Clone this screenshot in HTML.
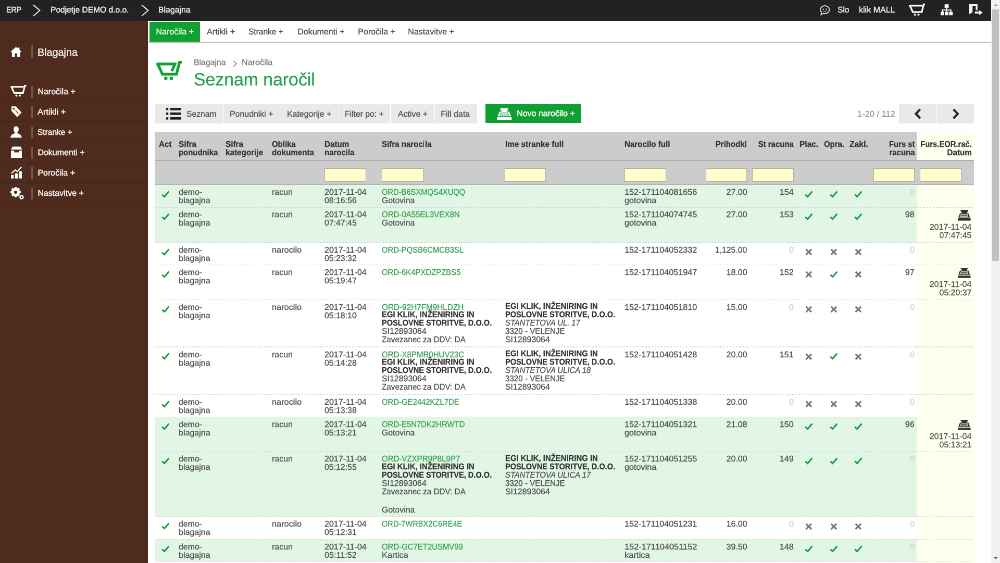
<!DOCTYPE html>
<html lang="sl">
<head>
<meta charset="utf-8">
<title>Seznam naročil - Blagajna</title>
<style>
html,body{margin:0;padding:0;background:#fff;}
body{width:1000px;height:563px;overflow:hidden;position:relative;}
#w{position:absolute;left:0;top:0;width:1920px;height:1081px;overflow:hidden;transform:scale(0.5208333);will-change:transform;transform-origin:0 0;
font-family:"Liberation Sans",sans-serif;font-size:16px;line-height:16px;color:#505050;text-rendering:geometricPrecision;}
#w nav,#w header,#w aside,#w main{display:block;position:static;margin:0;padding:0;}
#w div,#w svg,#w span.t{position:absolute;display:block;}
#w div.dl{height:1.2px;background:repeating-linear-gradient(90deg,#d4d4d4 0,#d4d4d4 3.2px,transparent 3.2px,transparent 6px);}
#w span.t{white-space:nowrap;-webkit-text-stroke:0.3px currentColor;transform-origin:0 50%;}
#w span.b{font-weight:bold;-webkit-text-stroke:0.25px currentColor;}
</style>
</head>
<body>
<div id="w">
<nav id="sidebar">
<div style="left:0.00px;top:0.00px;width:284.16px;height:1080.96px;background:#4e2b1c;"></div>
<svg style="left:20.35px;top:90.24px;" width="21.50" height="19.20" viewBox="0 0 22 20"><path d="M11 0 L0 9.6 L1.6 11 L2.8 10 V20 H8.6 V13 H13.4 V20 H19.2 V10 L20.4 11 L22 9.6 L18 6.1 V1.2 H15.2 V3.7Z" fill="#fff"/></svg>
<div style="left:59.52px;top:87.36px;width:3.07px;height:24.77px;background:#78574a;"></div>
<span class="t" style="top:90.88px;left:72.38px;font-size:20px;line-height:20px;color:#f4ebe7;transform:scaleX(0.9894);-webkit-text-stroke-width:0.45px;">Blagajna</span>
<div style="left:0.00px;top:154.66px;width:284.16px;height:1.73px;background:#432418;"></div>
<div style="left:59.52px;top:164.93px;width:3.07px;height:23.42px;background:#78574a;"></div>
<span class="t" style="top:168.95px;left:72.38px;color:#f7efec;-webkit-text-stroke-width:0.5px;">Naročila +</span>
<div style="left:0.00px;top:193.65px;width:284.16px;height:1.73px;background:#432418;"></div>
<div style="left:59.52px;top:203.92px;width:3.07px;height:23.42px;background:#78574a;"></div>
<span class="t" style="top:207.95px;left:72.38px;color:#f7efec;transform:scaleX(1.0267);-webkit-text-stroke-width:0.5px;">Artikli +</span>
<div style="left:0.00px;top:232.65px;width:284.16px;height:1.73px;background:#432418;"></div>
<div style="left:59.52px;top:242.92px;width:3.07px;height:23.42px;background:#78574a;"></div>
<span class="t" style="top:246.94px;left:72.38px;color:#f7efec;transform:scaleX(0.9701);-webkit-text-stroke-width:0.5px;">Stranke +</span>
<div style="left:0.00px;top:271.64px;width:284.16px;height:1.73px;background:#432418;"></div>
<div style="left:59.52px;top:281.91px;width:3.07px;height:23.42px;background:#78574a;"></div>
<span class="t" style="top:285.94px;left:72.38px;color:#f7efec;-webkit-text-stroke-width:0.5px;">Dokumenti +</span>
<div style="left:0.00px;top:310.64px;width:284.16px;height:1.73px;background:#432418;"></div>
<div style="left:59.52px;top:320.91px;width:3.07px;height:23.42px;background:#78574a;"></div>
<span class="t" style="top:324.93px;left:72.38px;color:#f7efec;-webkit-text-stroke-width:0.5px;">Poročila +</span>
<div style="left:0.00px;top:349.63px;width:284.16px;height:1.73px;background:#432418;"></div>
<div style="left:59.52px;top:359.90px;width:3.07px;height:23.42px;background:#78574a;"></div>
<span class="t" style="top:363.93px;left:72.38px;color:#f7efec;-webkit-text-stroke-width:0.5px;">Nastavitve +</span>
<div style="left:0.00px;top:388.63px;width:284.16px;height:1.73px;background:#432418;"></div>
<svg style="left:20.35px;top:163.20px;" width="30.91" height="22.66" viewBox="0 0 50 37"><g fill="none" stroke="#fff" stroke-width="5.2" stroke-linejoin="miter"><path d="M0.3 6 H41"/><path d="M3 6 L11.8 25.6 H39 L45 1.9 H50"/></g><circle cx="18.4" cy="33.6" r="3.3" fill="#fff"/><circle cx="29" cy="33.6" r="3.3" fill="#fff"/></svg>
<svg style="left:20.74px;top:202.58px;" width="21.50" height="23.04" viewBox="0 0 22 23"><path d="M1 1 H10 L21 13 L12 22 L1 10Z" fill="#fff"/><circle cx="5.5" cy="5.5" r="2" fill="#4e2b1c"/><path d="M9 9 L14.5 15.5" stroke="#4e2b1c" stroke-width="1.5"/></svg>
<svg style="left:20.35px;top:241.96px;" width="21.89" height="22.66" viewBox="0 0 22 22"><path d="M11 0 C14.2 0 16 2.4 16 5.6 C16 8.6 14.8 10.6 13.4 11.8 V13.6 C17.5 14.8 21.5 16.5 22 22 H0 C0.5 16.5 4.5 14.8 8.6 13.6 V11.8 C7.2 10.6 6 8.6 6 5.6 C6 2.4 7.8 0 11 0Z" fill="#fff"/></svg>
<svg style="left:20.74px;top:281.34px;" width="21.50" height="22.27" viewBox="0 0 22 22"><path d="M3 0 H19 L22 6 H0Z" fill="#fff"/><path d="M0 8 H6.5 V11.5 H15.5 V8 H22 V22 H0Z" fill="#fff"/></svg>
<svg style="left:20.74px;top:319.18px;" width="21.50" height="23.81" viewBox="0 0 22 24"><g fill="#fff"><rect x="0" y="17" width="5.5" height="7"/><rect x="8" y="14" width="5.5" height="10"/><rect x="16" y="10" width="5.5" height="14"/></g><path d="M1 14 L8.5 7.5 L12.5 10.5 L21 1" fill="none" stroke="#fff" stroke-width="2.2"/></svg>
<svg style="left:19.58px;top:358.75px;" width="26.50" height="24.58" viewBox="0 0 28 26"><circle cx="10.5" cy="10.5" r="6.3" fill="none" stroke="#fff" stroke-width="5"/><g stroke="#fff" stroke-width="4.2"><path d="M10.5 0 V21 M0 10.5 H21 M3.1 3.1 L17.9 17.9 M17.9 3.1 L3.1 17.9"/></g><circle cx="10.5" cy="10.5" r="3.2" fill="#4e2b1c"/><circle cx="22.6" cy="20.6" r="3.2" fill="none" stroke="#fff" stroke-width="2.6"/><circle cx="22.6" cy="20.6" r="1.3" fill="#4e2b1c"/></svg>
</nav>
<header id="topbar">
<div style="left:0.00px;top:0.00px;width:1902.91px;height:40.01px;background:#222222;"></div>
<span class="t" style="top:11.70px;left:12.48px;color:#eeeeee;transform:scaleX(0.8829);-webkit-text-stroke-width:0.45px;">ERP</span>
<span class="t" style="top:11.70px;left:96.96px;color:#eeeeee;transform:scaleX(0.9722);-webkit-text-stroke-width:0.45px;">Podjetje DEMO d.o.o.</span>
<span class="t" style="top:11.70px;left:304.32px;color:#eeeeee;transform:scaleX(0.9894);-webkit-text-stroke-width:0.45px;">Blagajna</span>
<svg style="left:62.98px;top:7.68px;" width="14.98" height="24.19" viewBox="0 0 14 22"><path d="M1 1 L12.5 11 L1 21" fill="none" stroke="#e4e4e4" stroke-width="2"/></svg>
<svg style="left:271.30px;top:7.68px;" width="14.98" height="24.19" viewBox="0 0 14 22"><path d="M1 1 L12.5 11 L1 21" fill="none" stroke="#e4e4e4" stroke-width="2"/></svg>
<span class="t" style="top:11.70px;left:1607.81px;color:#eeeeee;transform:scaleX(0.9736);-webkit-text-stroke-width:0.45px;">Slo</span>
<span class="t" style="top:11.70px;left:1648.51px;color:#eeeeee;transform:scaleX(1.0057);-webkit-text-stroke-width:0.45px;">klik MALL</span>
<svg style="left:1573.25px;top:8.83px;" width="21.50" height="21.12" viewBox="0 0 22 22"><path d="M11 2 C5.8 2 2 5.6 2 10 C2 12.3 3 14.2 4.6 15.6 L3.4 20 L8.3 17.6 C9.2 17.9 10.1 18 11 18 C16.2 18 20 14.4 20 10 C20 5.6 16.2 2 11 2Z" fill="none" stroke="#ddd" stroke-width="2"/><circle cx="8" cy="9" r="1.3" fill="#ddd"/><circle cx="14" cy="9" r="1.3" fill="#ddd"/><path d="M7.5 12.5 Q11 14.5 14.5 12.5" fill="none" stroke="#ddd" stroke-width="1.3"/></svg>
<svg style="left:1744.51px;top:6.91px;" width="31.87" height="23.42" viewBox="0 0 50 37"><g fill="none" stroke="#ffffff" stroke-width="5.2" stroke-linejoin="miter"><path d="M0.3 6 H41"/><path d="M3 6 L11.8 25.6 H39 L45 1.9 H50"/></g><circle cx="18.4" cy="33.6" r="3.3" fill="#ffffff"/><circle cx="29" cy="33.6" r="3.3" fill="#ffffff"/></svg>
<svg style="left:1805.95px;top:8.06px;" width="23.04" height="21.50" viewBox="0 0 24 22"><g fill="#fff"><rect x="8" y="0" width="8" height="7"/><rect x="0" y="15" width="7" height="7"/><rect x="8.5" y="15" width="7" height="7"/><rect x="17" y="15" width="7" height="7"/><rect x="11" y="7" width="2" height="8"/><rect x="2.5" y="10.5" width="19" height="2"/><rect x="2.5" y="10.5" width="2" height="5"/><rect x="19.5" y="10.5" width="2" height="5"/></g></svg>
<svg style="left:1860.10px;top:7.68px;" width="26.88" height="21.89" viewBox="0 0 28 23"><path d="M0 0 H17.5 V12 H14 V3.5 H7.5 L7.5 16.5 L0 20.5Z" fill="#f2f2f2"/><path d="M12 15 H21 V11.8 L28 17 L21 22.2 V19 H12Z" fill="#f2f2f2"/></svg>
</header>
<aside id="scrollbar">
<div style="left:1902.91px;top:0.00px;width:17.09px;height:1080.96px;background:#f1f1f1;"></div>
<div style="left:1905.02px;top:18.05px;width:12.86px;height:482.50px;background:#c1c1c1;"></div>
<svg style="left:1907.52px;top:6.53px;" width="7.68" height="4.61" viewBox="0 0 10 6"><path d="M0 6 L5 0 L10 6Z" fill="#a3a3a3"/></svg>
<svg style="left:1907.52px;top:1069.44px;" width="7.68" height="4.99" viewBox="0 0 10 6"><path d="M0 0 L5 6 L10 0Z" fill="#505050"/></svg>
</aside>
<nav id="tabs">
<div style="left:284.16px;top:80.45px;width:1618.75px;height:1.92px;background:#c0c0c0;"></div>
<div style="left:287.04px;top:42.24px;width:96.96px;height:37.63px;background:#109f33;"></div>
<span class="t" style="top:53.94px;left:299.52px;color:#e6ffe6;">Naročila +</span>
<span class="t" style="top:53.94px;left:397.44px;color:#4c4c4c;transform:scaleX(1.0267);">Artikli +</span>
<span class="t" style="top:53.94px;left:477.12px;color:#4c4c4c;transform:scaleX(0.9701);">Stranke +</span>
<span class="t" style="top:53.94px;left:571.20px;color:#4c4c4c;">Dokumenti +</span>
<span class="t" style="top:53.94px;left:687.36px;color:#4c4c4c;">Poročila +</span>
<span class="t" style="top:53.94px;left:783.36px;color:#4c4c4c;">Nastavitve +</span>
</nav>
<main id="content">
<svg style="left:299.65px;top:117.02px;" width="49.79" height="36.77" viewBox="0 0 50 37"><g fill="none" stroke="#109f33" stroke-width="5.3" stroke-linejoin="miter"><path d="M0.3 6 H36 L30 19.8"/><path d="M3 6 L11.8 25.6 H39 L45 1.9 H50"/></g><circle cx="18.4" cy="33.6" r="3.3" fill="#109f33"/><circle cx="29" cy="33.6" r="3.3" fill="#109f33"/></svg>
<span class="t" style="top:113.46px;left:372.48px;color:#777;transform:scaleX(0.9894);">Blagajna</span>
<svg style="left:446.98px;top:115.78px;" width="8.83" height="12.67" viewBox="0 0 9 13"><path d="M1 1 L7.5 6.5 L1 12" fill="none" stroke="#808080" stroke-width="1.6"/></svg>
<span class="t" style="top:113.46px;left:463.87px;color:#777;transform:scaleX(1.0116);">Naročila</span>
<span class="t" style="top:136.05px;left:372.48px;font-size:34px;line-height:34px;color:#26a14a;transform:scaleX(0.9934);">Seznam naročil</span>
<div style="left:297.60px;top:199.68px;width:130.94px;height:37.82px;background:#e9e9e9;"></div>
<div style="left:430.08px;top:199.68px;width:108.67px;height:37.82px;background:#e9e9e9;"></div>
<div style="left:540.29px;top:199.68px;width:109.44px;height:37.82px;background:#e9e9e9;"></div>
<div style="left:651.26px;top:199.68px;width:97.92px;height:37.82px;background:#e9e9e9;"></div>
<div style="left:751.10px;top:199.68px;width:82.56px;height:37.82px;background:#e9e9e9;"></div>
<div style="left:835.20px;top:199.68px;width:80.64px;height:37.82px;background:#e9e9e9;"></div>
<span class="t" style="top:211.58px;left:358.08px;transform:scaleX(0.9795);">Seznam</span>
<span class="t" style="top:211.58px;left:440.64px;transform:scaleX(0.9941);">Ponudniki +</span>
<span class="t" style="top:211.58px;left:551.04px;transform:scaleX(0.9931);">Kategorije +</span>
<span class="t" style="top:211.58px;left:662.40px;transform:scaleX(0.9833);">Filter po: +</span>
<span class="t" style="top:211.58px;left:764.16px;transform:scaleX(0.9958);">Active +</span>
<span class="t" style="top:211.58px;left:846.24px;">Fill data</span>
<svg style="left:317.76px;top:207.36px;" width="30.14" height="22.66" viewBox="0 0 30 23"><g fill="#222"><rect x="0" y="0" width="5" height="4.6"/><rect x="0" y="9.2" width="5" height="4.6"/><rect x="0" y="18.4" width="5" height="4.6"/><rect x="8.5" y="0" width="21.5" height="4.8"/><rect x="8.5" y="9.1" width="21.5" height="4.8"/><rect x="8.5" y="18.2" width="21.5" height="4.8"/></g></svg>
<div style="left:931.68px;top:199.68px;width:184.32px;height:37.82px;background:#109f33;"></div>
<svg style="left:954.24px;top:207.74px;" width="28.80" height="22.27" viewBox="0 0 24.6 19.6"><path fill="#fff" d="M5.5 0 H19 V3 H17 V5.5 H20.5 L23.5 13.5 H1 L4 5.5 H7.5 V3 H5.5 Z M6 7 L4.3 11.8 H20.2 L18.5 7 Z"/><path fill="#fff" d="M6.6 7.8 H17.9 L19 11 H5.5 Z" opacity="0.75"/><rect x="0" y="15" width="24.6" height="4.6" fill="#fff"/></svg>
<span class="t" style="top:211.38px;left:992.16px;color:#f0fff0;-webkit-text-stroke-width:0.6px;">Novo naročilo +</span>
<span class="t" style="top:211.77px;left:1646.40px;color:#999;transform:scaleX(1.0289);">1-20 / 112</span>
<div style="left:1726.08px;top:199.68px;width:71.62px;height:37.82px;background:#e9e9e9;"></div>
<div style="left:1799.04px;top:199.68px;width:70.56px;height:37.82px;background:#e9e9e9;"></div>
<svg style="left:1755.26px;top:207.94px;" width="14.21" height="21.12" viewBox="0 0 13 20"><path d="M10.8 1.8 L3 10 L10.8 18.2" fill="none" stroke="#2a2a2a" stroke-width="4"/></svg>
<svg style="left:1827.65px;top:207.94px;" width="14.21" height="21.12" viewBox="0 0 13 20"><path d="M2.2 1.8 L10 10 L2.2 18.2" fill="none" stroke="#2a2a2a" stroke-width="4"/></svg>
<div style="left:1760.26px;top:253.63px;width:109.34px;height:827.33px;background:#fffff0;"></div>
<div style="left:297.41px;top:253.63px;width:1462.85px;height:101.38px;background:#cccccc;"></div>
<div style="left:1760.26px;top:307.20px;width:109.34px;height:47.81px;background:#cccccc;"></div>
<div style="left:297.41px;top:306.82px;width:1572.19px;height:1.92px;background:#aeaeae;"></div>
<div style="left:297.41px;top:253.06px;width:1462.85px;height:1.34px;background:#bdbdbd;"></div>
<span class="t b" style="top:270.33px;left:305.47px;color:#333;transform:scaleX(0.9515);">Act</span>
<span class="t b" style="top:270.33px;left:343.10px;color:#333;transform:scaleX(0.9558);">Sifra</span>
<span class="t b" style="top:286.32px;left:343.10px;color:#333;transform:scaleX(0.9313);">ponudnika</span>
<span class="t b" style="top:270.33px;left:432.96px;color:#333;transform:scaleX(0.9558);">Sifra</span>
<span class="t b" style="top:286.32px;left:432.96px;color:#333;transform:scaleX(0.9561);">kategorije</span>
<span class="t b" style="top:270.33px;left:521.76px;color:#333;transform:scaleX(0.9337);">Oblika</span>
<span class="t b" style="top:286.32px;left:521.76px;color:#333;transform:scaleX(0.9494);">dokumenta</span>
<span class="t b" style="top:270.33px;left:623.04px;color:#333;transform:scaleX(0.9482);">Datum</span>
<span class="t b" style="top:286.32px;left:623.04px;color:#333;transform:scaleX(0.9381);">narocila</span>
<span class="t b" style="top:270.33px;left:733.44px;color:#333;transform:scaleX(0.9425);">Sifra narocila</span>
<span class="t b" style="top:270.33px;left:969.60px;color:#333;transform:scaleX(0.9555);">Ime stranke full</span>
<span class="t b" style="top:270.33px;left:1199.04px;color:#333;transform:scaleX(0.9468);">Narocilo full</span>
<span class="t b" style="top:270.33px;right:485.76px;transform-origin:100% 50%;color:#333;transform:scaleX(0.9410);">Prihodki</span>
<span class="t b" style="top:270.33px;right:396.00px;transform-origin:100% 50%;color:#333;transform:scaleX(0.9362);">St racuna</span>
<span class="t b" style="top:270.33px;left:1535.04px;color:#333;transform:scaleX(0.9678);">Plac.</span>
<span class="t b" style="top:270.33px;left:1581.60px;color:#333;transform:scaleX(0.9308);">Opra.</span>
<span class="t b" style="top:270.33px;left:1630.56px;color:#333;transform:scaleX(0.9798);">Zakl.</span>
<span class="t b" style="top:270.33px;right:163.20px;transform-origin:100% 50%;color:#333;transform:scaleX(0.9235);">Furs st</span>
<span class="t b" style="top:286.32px;right:163.20px;transform-origin:100% 50%;color:#333;transform:scaleX(0.9346);">racuna</span>
<span class="t b" style="top:270.33px;right:54.72px;transform-origin:100% 50%;color:#333;transform:scaleX(0.9222);">Furs.EOR.rač.</span>
<span class="t b" style="top:286.32px;right:54.72px;transform-origin:100% 50%;color:#333;transform:scaleX(0.9482);">Datum</span>
<div style="left:623.04px;top:323.04px;width:79.87px;height:25.92px;background:#ffffcc;border:1px solid #b4b29b;box-sizing:border-box;"></div>
<div style="left:732.96px;top:323.04px;width:79.87px;height:25.92px;background:#ffffcc;border:1px solid #b4b29b;box-sizing:border-box;"></div>
<div style="left:968.64px;top:323.04px;width:79.87px;height:25.92px;background:#ffffcc;border:1px solid #b4b29b;box-sizing:border-box;"></div>
<div style="left:1199.04px;top:323.04px;width:79.87px;height:25.92px;background:#ffffcc;border:1px solid #b4b29b;box-sizing:border-box;"></div>
<div style="left:1354.56px;top:323.04px;width:79.87px;height:25.92px;background:#ffffcc;border:1px solid #b4b29b;box-sizing:border-box;"></div>
<div style="left:1444.32px;top:323.04px;width:79.87px;height:25.92px;background:#ffffcc;border:1px solid #b4b29b;box-sizing:border-box;"></div>
<div style="left:1676.64px;top:323.04px;width:79.87px;height:25.92px;background:#ffffcc;border:1px solid #b4b29b;box-sizing:border-box;"></div>
<div style="left:1766.40px;top:323.04px;width:79.87px;height:25.92px;background:#ffffcc;border:1px solid #b4b29b;box-sizing:border-box;"></div>
<div style="left:297.41px;top:354.43px;width:1462.85px;height:43.78px;background:#e1f6e4;"></div>
<svg style="left:309.50px;top:366.14px;" width="15.74" height="13.63" viewBox="0 0 15.7 13.6"><path d="M1.3 7.6 L5.6 11.6 L14.3 1.6" fill="none" stroke="#159c3a" stroke-width="3"/></svg>
<span class="t" style="top:362.20px;left:343.10px;transform:scaleX(0.9941);">demo-</span>
<span class="t" style="top:378.20px;left:343.10px;">blagajna</span>
<span class="t" style="top:362.20px;left:521.76px;transform:scaleX(0.9955);">racun</span>
<span class="t" style="top:362.20px;left:623.04px;">2017-11-04</span>
<span class="t" style="top:378.20px;left:623.04px;transform:scaleX(0.9907);">08:16:56</span>
<span class="t" style="top:362.20px;left:733.44px;color:#36a155;transform:scaleX(0.9192);">ORD-B6SXMQS4XUQQ</span>
<span class="t" style="top:378.20px;left:733.44px;transform:scaleX(0.9883);">Gotovina</span>
<span class="t" style="top:362.20px;left:1199.04px;transform:scaleX(1.0123);">152-171104081656</span>
<span class="t" style="top:378.20px;left:1199.04px;transform:scaleX(1.0146);">gotovina</span>
<span class="t" style="top:362.20px;right:485.38px;transform-origin:100% 50%;">27.00</span>
<span class="t" style="top:362.20px;right:396.29px;transform-origin:100% 50%;transform:scaleX(1.0105);">154</span>
<svg style="left:1545.41px;top:366.14px;" width="15.74" height="13.63" viewBox="0 0 15.7 13.6"><path d="M1.3 7.6 L5.6 11.6 L14.3 1.6" fill="none" stroke="#159c3a" stroke-width="3"/></svg>
<svg style="left:1592.64px;top:366.14px;" width="15.74" height="13.63" viewBox="0 0 15.7 13.6"><path d="M1.3 7.6 L5.6 11.6 L14.3 1.6" fill="none" stroke="#159c3a" stroke-width="3"/></svg>
<svg style="left:1640.06px;top:366.14px;" width="15.74" height="13.63" viewBox="0 0 15.7 13.6"><path d="M1.3 7.6 L5.6 11.6 L14.3 1.6" fill="none" stroke="#159c3a" stroke-width="3"/></svg>
<span class="t" style="top:362.20px;right:163.78px;transform-origin:100% 50%;color:#cfcfcf;transform:scaleX(1.0105);">0</span>
<div style="left:297.41px;top:397.63px;width:1462.85px;height:68.16px;background:#e1f6e4;"></div>
<div class="dl" style="left:297.41px;top:397.33px;width:1572.19px;"></div>
<svg style="left:309.50px;top:409.34px;" width="15.74" height="13.63" viewBox="0 0 15.7 13.6"><path d="M1.3 7.6 L5.6 11.6 L14.3 1.6" fill="none" stroke="#159c3a" stroke-width="3"/></svg>
<span class="t" style="top:405.40px;left:343.10px;transform:scaleX(0.9941);">demo-</span>
<span class="t" style="top:421.40px;left:343.10px;">blagajna</span>
<span class="t" style="top:405.40px;left:521.76px;transform:scaleX(0.9955);">racun</span>
<span class="t" style="top:405.40px;left:623.04px;">2017-11-04</span>
<span class="t" style="top:421.40px;left:623.04px;transform:scaleX(0.9907);">07:47:45</span>
<span class="t" style="top:405.40px;left:733.44px;color:#36a155;transform:scaleX(0.9399);">ORD-0A55EL3VEX8N</span>
<span class="t" style="top:421.40px;left:733.44px;transform:scaleX(0.9883);">Gotovina</span>
<span class="t" style="top:405.40px;left:1199.04px;transform:scaleX(1.0123);">152-171104074745</span>
<span class="t" style="top:421.40px;left:1199.04px;transform:scaleX(1.0146);">gotovina</span>
<span class="t" style="top:405.40px;right:485.38px;transform-origin:100% 50%;">27.00</span>
<span class="t" style="top:405.40px;right:396.29px;transform-origin:100% 50%;transform:scaleX(1.0105);">153</span>
<svg style="left:1545.41px;top:409.34px;" width="15.74" height="13.63" viewBox="0 0 15.7 13.6"><path d="M1.3 7.6 L5.6 11.6 L14.3 1.6" fill="none" stroke="#159c3a" stroke-width="3"/></svg>
<svg style="left:1592.64px;top:409.34px;" width="15.74" height="13.63" viewBox="0 0 15.7 13.6"><path d="M1.3 7.6 L5.6 11.6 L14.3 1.6" fill="none" stroke="#159c3a" stroke-width="3"/></svg>
<svg style="left:1640.06px;top:409.34px;" width="15.74" height="13.63" viewBox="0 0 15.7 13.6"><path d="M1.3 7.6 L5.6 11.6 L14.3 1.6" fill="none" stroke="#159c3a" stroke-width="3"/></svg>
<span class="t" style="top:405.40px;right:163.78px;transform-origin:100% 50%;transform:scaleX(1.0105);">98</span>
<svg style="left:1838.98px;top:403.97px;" width="24.58" height="19.58" viewBox="0 0 24.6 19.6"><path fill="#333" d="M5.5 0 H19 V3 H17 V5.5 H20.5 L23.5 13.5 H1 L4 5.5 H7.5 V3 H5.5 Z M6 7 L4.3 11.8 H20.2 L18.5 7 Z"/><path fill="#333" d="M6.6 7.8 H17.9 L19 11 H5.5 Z" opacity="0.75"/><rect x="0" y="15" width="24.6" height="4.6" fill="#333"/></svg>
<span class="t" style="top:429.02px;right:54.72px;transform-origin:100% 50%;">2017-11-04</span>
<span class="t" style="top:445.02px;right:54.72px;transform-origin:100% 50%;transform:scaleX(0.9907);">07:47:45</span>
<div class="dl" style="left:297.41px;top:464.92px;width:1572.19px;"></div>
<svg style="left:309.50px;top:476.93px;" width="15.74" height="13.63" viewBox="0 0 15.7 13.6"><path d="M1.3 7.6 L5.6 11.6 L14.3 1.6" fill="none" stroke="#159c3a" stroke-width="3"/></svg>
<span class="t" style="top:472.98px;left:343.10px;transform:scaleX(0.9941);">demo-</span>
<span class="t" style="top:488.98px;left:343.10px;">blagajna</span>
<span class="t" style="top:472.98px;left:521.76px;transform:scaleX(1.0210);">narocilo</span>
<span class="t" style="top:472.98px;left:623.04px;">2017-11-04</span>
<span class="t" style="top:488.98px;left:623.04px;transform:scaleX(0.9907);">05:23:32</span>
<span class="t" style="top:472.98px;left:733.44px;color:#36a155;transform:scaleX(0.9258);">ORD-PQSB6CMCB3SL</span>
<span class="t" style="top:472.98px;left:1199.04px;transform:scaleX(1.0123);">152-171104052332</span>
<span class="t" style="top:472.98px;right:485.38px;transform-origin:100% 50%;transform:scaleX(0.9846);">1,125.00</span>
<span class="t" style="top:472.98px;right:396.29px;transform-origin:100% 50%;color:#cfcfcf;transform:scaleX(1.0105);">0</span>
<svg style="left:1546.46px;top:477.31px;" width="13.63" height="13.63" viewBox="0 0 13.6 13.6"><path d="M1.6 1.6 L12 12 M12 1.6 L1.6 12" fill="none" stroke="#7a7a7a" stroke-width="3.4"/></svg>
<svg style="left:1593.70px;top:477.31px;" width="13.63" height="13.63" viewBox="0 0 13.6 13.6"><path d="M1.6 1.6 L12 12 M12 1.6 L1.6 12" fill="none" stroke="#7a7a7a" stroke-width="3.4"/></svg>
<svg style="left:1641.12px;top:477.31px;" width="13.63" height="13.63" viewBox="0 0 13.6 13.6"><path d="M1.6 1.6 L12 12 M12 1.6 L1.6 12" fill="none" stroke="#7a7a7a" stroke-width="3.4"/></svg>
<span class="t" style="top:472.98px;right:163.78px;transform-origin:100% 50%;color:#cfcfcf;transform:scaleX(1.0105);">0</span>
<div class="dl" style="left:297.41px;top:507.73px;width:1572.19px;"></div>
<svg style="left:309.50px;top:519.74px;" width="15.74" height="13.63" viewBox="0 0 15.7 13.6"><path d="M1.3 7.6 L5.6 11.6 L14.3 1.6" fill="none" stroke="#159c3a" stroke-width="3"/></svg>
<span class="t" style="top:515.80px;left:343.10px;transform:scaleX(0.9941);">demo-</span>
<span class="t" style="top:531.80px;left:343.10px;">blagajna</span>
<span class="t" style="top:515.80px;left:521.76px;transform:scaleX(0.9955);">racun</span>
<span class="t" style="top:515.80px;left:623.04px;">2017-11-04</span>
<span class="t" style="top:531.80px;left:623.04px;transform:scaleX(0.9907);">05:19:47</span>
<span class="t" style="top:515.80px;left:733.44px;color:#36a155;transform:scaleX(0.9313);">ORD-6K4PXDZPZBS5</span>
<span class="t" style="top:515.80px;left:1199.04px;transform:scaleX(1.0123);">152-171104051947</span>
<span class="t" style="top:515.80px;right:485.38px;transform-origin:100% 50%;">18.00</span>
<span class="t" style="top:515.80px;right:396.29px;transform-origin:100% 50%;transform:scaleX(1.0105);">152</span>
<svg style="left:1546.46px;top:520.13px;" width="13.63" height="13.63" viewBox="0 0 13.6 13.6"><path d="M1.6 1.6 L12 12 M12 1.6 L1.6 12" fill="none" stroke="#7a7a7a" stroke-width="3.4"/></svg>
<svg style="left:1592.64px;top:519.74px;" width="15.74" height="13.63" viewBox="0 0 15.7 13.6"><path d="M1.3 7.6 L5.6 11.6 L14.3 1.6" fill="none" stroke="#159c3a" stroke-width="3"/></svg>
<svg style="left:1641.12px;top:520.13px;" width="13.63" height="13.63" viewBox="0 0 13.6 13.6"><path d="M1.6 1.6 L12 12 M12 1.6 L1.6 12" fill="none" stroke="#7a7a7a" stroke-width="3.4"/></svg>
<span class="t" style="top:515.80px;right:163.78px;transform-origin:100% 50%;transform:scaleX(1.0105);">97</span>
<svg style="left:1838.98px;top:514.37px;" width="24.58" height="19.58" viewBox="0 0 24.6 19.6"><path fill="#333" d="M5.5 0 H19 V3 H17 V5.5 H20.5 L23.5 13.5 H1 L4 5.5 H7.5 V3 H5.5 Z M6 7 L4.3 11.8 H20.2 L18.5 7 Z"/><path fill="#333" d="M6.6 7.8 H17.9 L19 11 H5.5 Z" opacity="0.75"/><rect x="0" y="15" width="24.6" height="4.6" fill="#333"/></svg>
<span class="t" style="top:539.42px;right:54.72px;transform-origin:100% 50%;">2017-11-04</span>
<span class="t" style="top:555.42px;right:54.72px;transform-origin:100% 50%;transform:scaleX(0.9907);">05:20:37</span>
<div class="dl" style="left:297.41px;top:574.55px;width:1572.19px;"></div>
<svg style="left:309.50px;top:586.56px;" width="15.74" height="13.63" viewBox="0 0 15.7 13.6"><path d="M1.3 7.6 L5.6 11.6 L14.3 1.6" fill="none" stroke="#159c3a" stroke-width="3"/></svg>
<span class="t" style="top:582.62px;left:343.10px;transform:scaleX(0.9941);">demo-</span>
<span class="t" style="top:598.62px;left:343.10px;">blagajna</span>
<span class="t" style="top:582.62px;left:521.76px;transform:scaleX(1.0210);">narocilo</span>
<span class="t" style="top:582.62px;left:623.04px;">2017-11-04</span>
<span class="t" style="top:598.62px;left:623.04px;transform:scaleX(0.9907);">05:18:10</span>
<span class="t" style="top:582.62px;left:733.44px;color:#36a155;transform:scaleX(0.9566);">ORD-92H7FM9HLDZH</span>
<span class="t b" style="top:597.27px;left:733.44px;color:#333;transform:scaleX(0.9304);">EGI KLIK, INŽENIRING IN</span>
<span class="t b" style="top:613.27px;left:733.44px;color:#333;transform:scaleX(0.9114);">POSLOVNE STORITVE, D.O.O.</span>
<span class="t" style="top:629.27px;left:733.44px;transform:scaleX(0.9940);">SI12893064</span>
<span class="t" style="top:645.27px;left:733.44px;transform:scaleX(0.9554);">Zavezanec za DDV: DA</span>
<span class="t b" style="top:581.27px;left:969.60px;color:#333;transform:scaleX(0.9304);">EGI KLIK, INŽENIRING IN</span>
<span class="t b" style="top:597.27px;left:969.60px;color:#333;transform:scaleX(0.9114);">POSLOVNE STORITVE, D.O.O.</span>
<span class="t" style="top:613.27px;left:969.60px;font-style:italic;transform:scaleX(0.9262);">STANTETOVA UL. 17</span>
<span class="t" style="top:629.27px;left:969.60px;transform:scaleX(0.9479);">3320 - VELENJE</span>
<span class="t" style="top:645.27px;left:969.60px;transform:scaleX(0.9940);">SI12893064</span>
<span class="t" style="top:582.62px;left:1199.04px;transform:scaleX(1.0123);">152-171104051810</span>
<span class="t" style="top:582.62px;right:485.38px;transform-origin:100% 50%;">15.00</span>
<span class="t" style="top:582.62px;right:396.29px;transform-origin:100% 50%;color:#cfcfcf;transform:scaleX(1.0105);">0</span>
<svg style="left:1546.46px;top:586.94px;" width="13.63" height="13.63" viewBox="0 0 13.6 13.6"><path d="M1.6 1.6 L12 12 M12 1.6 L1.6 12" fill="none" stroke="#7a7a7a" stroke-width="3.4"/></svg>
<svg style="left:1593.70px;top:586.94px;" width="13.63" height="13.63" viewBox="0 0 13.6 13.6"><path d="M1.6 1.6 L12 12 M12 1.6 L1.6 12" fill="none" stroke="#7a7a7a" stroke-width="3.4"/></svg>
<svg style="left:1641.12px;top:586.94px;" width="13.63" height="13.63" viewBox="0 0 13.6 13.6"><path d="M1.6 1.6 L12 12 M12 1.6 L1.6 12" fill="none" stroke="#7a7a7a" stroke-width="3.4"/></svg>
<span class="t" style="top:582.62px;right:163.78px;transform-origin:100% 50%;color:#cfcfcf;transform:scaleX(1.0105);">0</span>
<div class="dl" style="left:297.41px;top:665.46px;width:1572.19px;"></div>
<svg style="left:309.50px;top:677.47px;" width="15.74" height="13.63" viewBox="0 0 15.7 13.6"><path d="M1.3 7.6 L5.6 11.6 L14.3 1.6" fill="none" stroke="#159c3a" stroke-width="3"/></svg>
<span class="t" style="top:673.53px;left:343.10px;transform:scaleX(0.9941);">demo-</span>
<span class="t" style="top:689.53px;left:343.10px;">blagajna</span>
<span class="t" style="top:673.53px;left:521.76px;transform:scaleX(0.9955);">racun</span>
<span class="t" style="top:673.53px;left:623.04px;">2017-11-04</span>
<span class="t" style="top:689.53px;left:623.04px;transform:scaleX(0.9907);">05:14:28</span>
<span class="t" style="top:673.53px;left:733.44px;color:#36a155;transform:scaleX(0.9409);">ORD-X8PMR0HUV23C</span>
<span class="t b" style="top:688.18px;left:733.44px;color:#333;transform:scaleX(0.9304);">EGI KLIK, INŽENIRING IN</span>
<span class="t b" style="top:704.18px;left:733.44px;color:#333;transform:scaleX(0.9114);">POSLOVNE STORITVE, D.O.O.</span>
<span class="t" style="top:720.18px;left:733.44px;transform:scaleX(0.9940);">SI12893064</span>
<span class="t" style="top:736.18px;left:733.44px;transform:scaleX(0.9554);">Zavezanec za DDV: DA</span>
<span class="t b" style="top:672.18px;left:969.60px;color:#333;transform:scaleX(0.9304);">EGI KLIK, INŽENIRING IN</span>
<span class="t b" style="top:688.18px;left:969.60px;color:#333;transform:scaleX(0.9114);">POSLOVNE STORITVE, D.O.O.</span>
<span class="t" style="top:704.18px;left:969.60px;font-style:italic;transform:scaleX(0.9279);">STANTETOVA ULICA 18</span>
<span class="t" style="top:720.18px;left:969.60px;transform:scaleX(0.9479);">3320 - VELENJE</span>
<span class="t" style="top:736.18px;left:969.60px;transform:scaleX(0.9940);">SI12893064</span>
<span class="t" style="top:673.53px;left:1199.04px;transform:scaleX(1.0123);">152-171104051428</span>
<span class="t" style="top:673.53px;right:485.38px;transform-origin:100% 50%;">20.00</span>
<span class="t" style="top:673.53px;right:396.29px;transform-origin:100% 50%;transform:scaleX(1.0105);">151</span>
<svg style="left:1546.46px;top:677.86px;" width="13.63" height="13.63" viewBox="0 0 13.6 13.6"><path d="M1.6 1.6 L12 12 M12 1.6 L1.6 12" fill="none" stroke="#7a7a7a" stroke-width="3.4"/></svg>
<svg style="left:1592.64px;top:677.47px;" width="15.74" height="13.63" viewBox="0 0 15.7 13.6"><path d="M1.3 7.6 L5.6 11.6 L14.3 1.6" fill="none" stroke="#159c3a" stroke-width="3"/></svg>
<svg style="left:1641.12px;top:677.86px;" width="13.63" height="13.63" viewBox="0 0 13.6 13.6"><path d="M1.6 1.6 L12 12 M12 1.6 L1.6 12" fill="none" stroke="#7a7a7a" stroke-width="3.4"/></svg>
<span class="t" style="top:673.53px;right:163.78px;transform-origin:100% 50%;color:#cfcfcf;transform:scaleX(1.0105);">0</span>
<div class="dl" style="left:297.41px;top:756.95px;width:1572.19px;"></div>
<svg style="left:309.50px;top:768.96px;" width="15.74" height="13.63" viewBox="0 0 15.7 13.6"><path d="M1.3 7.6 L5.6 11.6 L14.3 1.6" fill="none" stroke="#159c3a" stroke-width="3"/></svg>
<span class="t" style="top:765.02px;left:343.10px;transform:scaleX(0.9941);">demo-</span>
<span class="t" style="top:781.02px;left:343.10px;">blagajna</span>
<span class="t" style="top:765.02px;left:521.76px;transform:scaleX(1.0210);">narocilo</span>
<span class="t" style="top:765.02px;left:623.04px;">2017-11-04</span>
<span class="t" style="top:781.02px;left:623.04px;transform:scaleX(0.9907);">05:13:38</span>
<span class="t" style="top:765.02px;left:733.44px;color:#36a155;transform:scaleX(0.9282);">ORD-GE2442KZL7DE</span>
<span class="t" style="top:765.02px;left:1199.04px;transform:scaleX(1.0123);">152-171104051338</span>
<span class="t" style="top:765.02px;right:485.38px;transform-origin:100% 50%;">20.00</span>
<span class="t" style="top:765.02px;right:396.29px;transform-origin:100% 50%;color:#cfcfcf;transform:scaleX(1.0105);">0</span>
<svg style="left:1546.46px;top:769.34px;" width="13.63" height="13.63" viewBox="0 0 13.6 13.6"><path d="M1.6 1.6 L12 12 M12 1.6 L1.6 12" fill="none" stroke="#7a7a7a" stroke-width="3.4"/></svg>
<svg style="left:1593.70px;top:769.34px;" width="13.63" height="13.63" viewBox="0 0 13.6 13.6"><path d="M1.6 1.6 L12 12 M12 1.6 L1.6 12" fill="none" stroke="#7a7a7a" stroke-width="3.4"/></svg>
<svg style="left:1641.12px;top:769.34px;" width="13.63" height="13.63" viewBox="0 0 13.6 13.6"><path d="M1.6 1.6 L12 12 M12 1.6 L1.6 12" fill="none" stroke="#7a7a7a" stroke-width="3.4"/></svg>
<span class="t" style="top:765.02px;right:163.78px;transform-origin:100% 50%;color:#cfcfcf;transform:scaleX(1.0105);">0</span>
<div style="left:297.41px;top:799.87px;width:1462.85px;height:67.20px;background:#e1f6e4;"></div>
<div class="dl" style="left:297.41px;top:799.57px;width:1572.19px;"></div>
<svg style="left:309.50px;top:811.58px;" width="15.74" height="13.63" viewBox="0 0 15.7 13.6"><path d="M1.3 7.6 L5.6 11.6 L14.3 1.6" fill="none" stroke="#159c3a" stroke-width="3"/></svg>
<span class="t" style="top:807.64px;left:343.10px;transform:scaleX(0.9941);">demo-</span>
<span class="t" style="top:823.64px;left:343.10px;">blagajna</span>
<span class="t" style="top:807.64px;left:521.76px;transform:scaleX(0.9955);">racun</span>
<span class="t" style="top:807.64px;left:623.04px;">2017-11-04</span>
<span class="t" style="top:823.64px;left:623.04px;transform:scaleX(0.9907);">05:13:21</span>
<span class="t" style="top:807.64px;left:733.44px;color:#36a155;transform:scaleX(0.9308);">ORD-E5N7DK2HRWTD</span>
<span class="t" style="top:823.64px;left:733.44px;transform:scaleX(0.9883);">Gotovina</span>
<span class="t" style="top:807.64px;left:1199.04px;transform:scaleX(1.0123);">152-171104051321</span>
<span class="t" style="top:823.64px;left:1199.04px;transform:scaleX(1.0146);">gotovina</span>
<span class="t" style="top:807.64px;right:485.38px;transform-origin:100% 50%;">21.08</span>
<span class="t" style="top:807.64px;right:396.29px;transform-origin:100% 50%;transform:scaleX(1.0105);">150</span>
<svg style="left:1545.41px;top:811.58px;" width="15.74" height="13.63" viewBox="0 0 15.7 13.6"><path d="M1.3 7.6 L5.6 11.6 L14.3 1.6" fill="none" stroke="#159c3a" stroke-width="3"/></svg>
<svg style="left:1592.64px;top:811.58px;" width="15.74" height="13.63" viewBox="0 0 15.7 13.6"><path d="M1.3 7.6 L5.6 11.6 L14.3 1.6" fill="none" stroke="#159c3a" stroke-width="3"/></svg>
<svg style="left:1640.06px;top:811.58px;" width="15.74" height="13.63" viewBox="0 0 15.7 13.6"><path d="M1.3 7.6 L5.6 11.6 L14.3 1.6" fill="none" stroke="#159c3a" stroke-width="3"/></svg>
<span class="t" style="top:807.64px;right:163.78px;transform-origin:100% 50%;transform:scaleX(1.0105);">96</span>
<svg style="left:1838.98px;top:806.21px;" width="24.58" height="19.58" viewBox="0 0 24.6 19.6"><path fill="#333" d="M5.5 0 H19 V3 H17 V5.5 H20.5 L23.5 13.5 H1 L4 5.5 H7.5 V3 H5.5 Z M6 7 L4.3 11.8 H20.2 L18.5 7 Z"/><path fill="#333" d="M6.6 7.8 H17.9 L19 11 H5.5 Z" opacity="0.75"/><rect x="0" y="15" width="24.6" height="4.6" fill="#333"/></svg>
<span class="t" style="top:831.26px;right:54.72px;transform-origin:100% 50%;">2017-11-04</span>
<span class="t" style="top:847.26px;right:54.72px;transform-origin:100% 50%;transform:scaleX(0.9907);">05:13:21</span>
<div style="left:297.41px;top:866.50px;width:1462.85px;height:125.57px;background:#e1f6e4;"></div>
<div class="dl" style="left:297.41px;top:866.20px;width:1572.19px;"></div>
<svg style="left:309.50px;top:878.21px;" width="15.74" height="13.63" viewBox="0 0 15.7 13.6"><path d="M1.3 7.6 L5.6 11.6 L14.3 1.6" fill="none" stroke="#159c3a" stroke-width="3"/></svg>
<span class="t" style="top:874.26px;left:343.10px;transform:scaleX(0.9941);">demo-</span>
<span class="t" style="top:890.26px;left:343.10px;">blagajna</span>
<span class="t" style="top:874.26px;left:521.76px;transform:scaleX(0.9955);">racun</span>
<span class="t" style="top:874.26px;left:623.04px;">2017-11-04</span>
<span class="t" style="top:890.26px;left:623.04px;transform:scaleX(0.9907);">05:12:55</span>
<span class="t" style="top:874.26px;left:733.44px;color:#36a155;transform:scaleX(0.9391);">ORD-VZXPR9P8L9P7</span>
<span class="t b" style="top:888.92px;left:733.44px;color:#333;transform:scaleX(0.9304);">EGI KLIK, INŽENIRING IN</span>
<span class="t b" style="top:904.92px;left:733.44px;color:#333;transform:scaleX(0.9114);">POSLOVNE STORITVE, D.O.O.</span>
<span class="t" style="top:920.92px;left:733.44px;transform:scaleX(0.9940);">SI12893064</span>
<span class="t" style="top:936.92px;left:733.44px;transform:scaleX(0.9554);">Zavezanec za DDV: DA</span>
<span class="t b" style="top:872.92px;left:969.60px;color:#333;transform:scaleX(0.9304);">EGI KLIK, INŽENIRING IN</span>
<span class="t b" style="top:888.92px;left:969.60px;color:#333;transform:scaleX(0.9114);">POSLOVNE STORITVE, D.O.O.</span>
<span class="t" style="top:904.92px;left:969.60px;font-style:italic;transform:scaleX(0.9279);">STANTETOVA ULICA 17</span>
<span class="t" style="top:920.92px;left:969.60px;transform:scaleX(0.9479);">3320 - VELENJE</span>
<span class="t" style="top:936.92px;left:969.60px;transform:scaleX(0.9940);">SI12893064</span>
<span class="t" style="top:972.09px;left:733.44px;transform:scaleX(0.9883);">Gotovina</span>
<span class="t" style="top:874.26px;left:1199.04px;transform:scaleX(1.0123);">152-171104051255</span>
<span class="t" style="top:890.26px;left:1199.04px;transform:scaleX(1.0146);">gotovina</span>
<span class="t" style="top:874.26px;right:485.38px;transform-origin:100% 50%;">20.00</span>
<span class="t" style="top:874.26px;right:396.29px;transform-origin:100% 50%;transform:scaleX(1.0105);">149</span>
<svg style="left:1545.41px;top:878.21px;" width="15.74" height="13.63" viewBox="0 0 15.7 13.6"><path d="M1.3 7.6 L5.6 11.6 L14.3 1.6" fill="none" stroke="#159c3a" stroke-width="3"/></svg>
<svg style="left:1592.64px;top:878.21px;" width="15.74" height="13.63" viewBox="0 0 15.7 13.6"><path d="M1.3 7.6 L5.6 11.6 L14.3 1.6" fill="none" stroke="#159c3a" stroke-width="3"/></svg>
<svg style="left:1640.06px;top:878.21px;" width="15.74" height="13.63" viewBox="0 0 15.7 13.6"><path d="M1.3 7.6 L5.6 11.6 L14.3 1.6" fill="none" stroke="#159c3a" stroke-width="3"/></svg>
<span class="t" style="top:874.26px;right:163.78px;transform-origin:100% 50%;color:#cfcfcf;transform:scaleX(1.0105);">0</span>
<div class="dl" style="left:297.41px;top:991.19px;width:1572.19px;"></div>
<svg style="left:309.50px;top:1003.20px;" width="15.74" height="13.63" viewBox="0 0 15.7 13.6"><path d="M1.3 7.6 L5.6 11.6 L14.3 1.6" fill="none" stroke="#159c3a" stroke-width="3"/></svg>
<span class="t" style="top:999.26px;left:343.10px;transform:scaleX(0.9941);">demo-</span>
<span class="t" style="top:1015.26px;left:343.10px;">blagajna</span>
<span class="t" style="top:999.26px;left:521.76px;transform:scaleX(1.0210);">narocilo</span>
<span class="t" style="top:999.26px;left:623.04px;">2017-11-04</span>
<span class="t" style="top:1015.26px;left:623.04px;transform:scaleX(0.9907);">05:12:31</span>
<span class="t" style="top:999.26px;left:733.44px;color:#36a155;transform:scaleX(0.9132);">ORD-7WRBX2C6RE4E</span>
<span class="t" style="top:999.26px;left:1199.04px;transform:scaleX(1.0123);">152-171104051231</span>
<span class="t" style="top:999.26px;right:485.38px;transform-origin:100% 50%;">16.00</span>
<span class="t" style="top:999.26px;right:396.29px;transform-origin:100% 50%;color:#cfcfcf;transform:scaleX(1.0105);">0</span>
<svg style="left:1546.46px;top:1003.58px;" width="13.63" height="13.63" viewBox="0 0 13.6 13.6"><path d="M1.6 1.6 L12 12 M12 1.6 L1.6 12" fill="none" stroke="#7a7a7a" stroke-width="3.4"/></svg>
<svg style="left:1593.70px;top:1003.58px;" width="13.63" height="13.63" viewBox="0 0 13.6 13.6"><path d="M1.6 1.6 L12 12 M12 1.6 L1.6 12" fill="none" stroke="#7a7a7a" stroke-width="3.4"/></svg>
<svg style="left:1641.12px;top:1003.58px;" width="13.63" height="13.63" viewBox="0 0 13.6 13.6"><path d="M1.6 1.6 L12 12 M12 1.6 L1.6 12" fill="none" stroke="#7a7a7a" stroke-width="3.4"/></svg>
<span class="t" style="top:999.26px;right:163.78px;transform-origin:100% 50%;color:#cfcfcf;transform:scaleX(1.0105);">0</span>
<div style="left:297.41px;top:1034.88px;width:1462.85px;height:43.97px;background:#e1f6e4;"></div>
<div class="dl" style="left:297.41px;top:1034.58px;width:1572.19px;"></div>
<svg style="left:309.50px;top:1046.59px;" width="15.74" height="13.63" viewBox="0 0 15.7 13.6"><path d="M1.3 7.6 L5.6 11.6 L14.3 1.6" fill="none" stroke="#159c3a" stroke-width="3"/></svg>
<span class="t" style="top:1042.65px;left:343.10px;transform:scaleX(0.9941);">demo-</span>
<span class="t" style="top:1058.65px;left:343.10px;">blagajna</span>
<span class="t" style="top:1042.65px;left:521.76px;transform:scaleX(0.9955);">racun</span>
<span class="t" style="top:1042.65px;left:623.04px;">2017-11-04</span>
<span class="t" style="top:1058.65px;left:623.04px;transform:scaleX(1.0100);">05:11:52</span>
<span class="t" style="top:1042.65px;left:733.44px;color:#36a155;transform:scaleX(0.9327);">ORD-GC7ET2USMV99</span>
<span class="t" style="top:1058.65px;left:733.44px;transform:scaleX(1.0193);">Kartica</span>
<span class="t" style="top:1042.65px;left:1199.04px;transform:scaleX(1.0211);">152-171104051152</span>
<span class="t" style="top:1058.65px;left:1199.04px;transform:scaleX(1.0361);">kartica</span>
<span class="t" style="top:1042.65px;right:485.38px;transform-origin:100% 50%;">39.50</span>
<span class="t" style="top:1042.65px;right:396.29px;transform-origin:100% 50%;transform:scaleX(1.0105);">148</span>
<svg style="left:1545.41px;top:1046.59px;" width="15.74" height="13.63" viewBox="0 0 15.7 13.6"><path d="M1.3 7.6 L5.6 11.6 L14.3 1.6" fill="none" stroke="#159c3a" stroke-width="3"/></svg>
<svg style="left:1592.64px;top:1046.59px;" width="15.74" height="13.63" viewBox="0 0 15.7 13.6"><path d="M1.3 7.6 L5.6 11.6 L14.3 1.6" fill="none" stroke="#159c3a" stroke-width="3"/></svg>
<svg style="left:1640.06px;top:1046.59px;" width="15.74" height="13.63" viewBox="0 0 15.7 13.6"><path d="M1.3 7.6 L5.6 11.6 L14.3 1.6" fill="none" stroke="#159c3a" stroke-width="3"/></svg>
<span class="t" style="top:1042.65px;right:163.78px;transform-origin:100% 50%;color:#cfcfcf;transform:scaleX(1.0105);">0</span>
<div class="dl" style="left:297.41px;top:1077.97px;width:1572.19px;"></div>
<div style="left:297.41px;top:353.09px;width:1572.19px;height:1.92px;background:#b4b4b4;"></div>
</main>
</div>
</body>
</html>
